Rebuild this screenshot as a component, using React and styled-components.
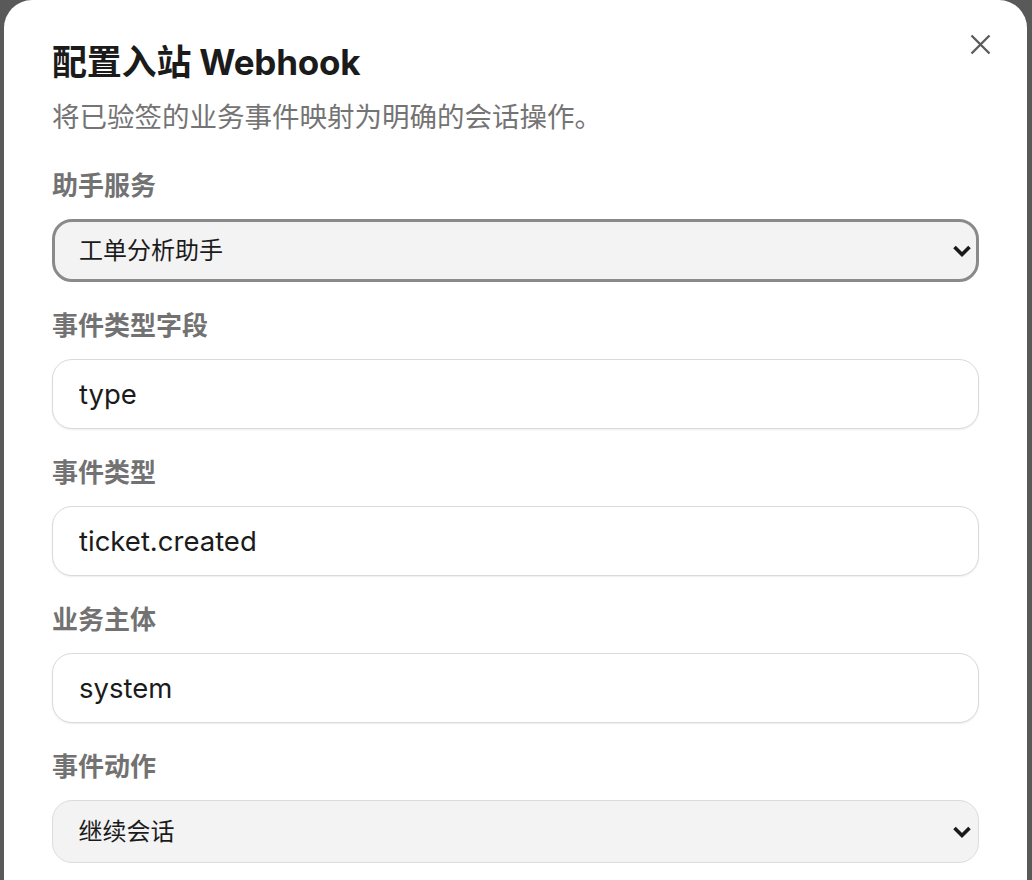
import React from "react";
import styled, { createGlobalStyle } from "styled-components";

const Global = createGlobalStyle`
  html, body {
    margin: 0;
    padding: 0;
    height: 880px;
    overflow: hidden;
    background: #595959;
  }
  * { box-sizing: border-box; }
  body {
    font-family: "Inter", "Noto Sans CJK SC", sans-serif;
  }
`;

const Page = styled.div`
  display: flex;
  padding-left: 4px;
`;

const Modal = styled.div`
  position: relative;
  width: 1023px;
  background: #ffffff;
  border-radius: 28px 28px 0 0;
  padding: 40px 48px 70px 48px;
  display: flex;
  flex-direction: column;
`;

const Header = styled.div`
  display: flex;
  flex-direction: column;
  gap: 14px;
  margin-bottom: 33px;
`;

const Title = styled.h2`
  margin: 0;
  font-size: 35px;
  line-height: 44px;
  font-weight: 700;
  color: #1b1b1b;
  letter-spacing: -0.2px;
`;

const Subtitle = styled.p`
  margin: 0;
  font-size: 27.5px;
  line-height: 38px;
  font-weight: 400;
  color: #747474;
`;

const CloseButton = styled.button`
  position: absolute;
  top: 34px;
  right: 36px;
  width: 21px;
  height: 21px;
  padding: 0;
  border: none;
  background: transparent;
  display: flex;
  align-items: center;
  justify-content: center;
  cursor: pointer;
`;

const Fields = styled.div`
  display: flex;
  flex-direction: column;
  gap: 27px;
`;

const Field = styled.label`
  display: flex;
  flex-direction: column;
  gap: 16px;
`;

const Label = styled.span`
  font-size: 26px;
  line-height: 34px;
  font-weight: 600;
  color: #727272;
`;

const TextInput = styled.input`
  width: 100%;
  height: 70px;
  padding: 0 26px;
  border: 1.5px solid #dadada;
  border-radius: 20px;
  background: #ffffff;
  box-shadow: 0 1px 2px rgba(0, 0, 0, 0.07);
  font-family: "Inter", "Noto Sans CJK SC", sans-serif;
  font-size: 27.5px;
  color: #1b1b1b;
  outline: none;
`;

const SelectWrap = styled.div`
  position: relative;
  width: 100%;
`;

const Select = styled.select`
  width: 100%;
  height: 63px;
  padding: 0 48px 0 ${(p) => (p.$focused ? "24px" : "25.5px")};
  border: ${(p) => (p.$focused ? "3px solid #8a8a8a" : "1.5px solid #dcdcdc")};
  border-radius: 20px;
  background: #f3f3f3;
  appearance: none;
  -webkit-appearance: none;
  font-family: "Inter", "Noto Sans CJK SC", sans-serif;
  font-size: 24px;
  color: #1b1b1b;
  outline: none;
`;

const Chevron = styled.svg`
  position: absolute;
  right: 7px;
  top: 50%;
  transform: translateY(-50%);
  pointer-events: none;
`;

const ChevronIcon = () => (
  <Chevron width="20" height="14" viewBox="0 0 20 14">
    <polyline
      points="2.5,3 10,10.5 17.5,3"
      fill="none"
      stroke="#1a1a1a"
      strokeWidth="3.6"
      strokeLinejoin="miter"
    />
  </Chevron>
);

const SelectField = ({ label, options, focused }) => (
  <Field>
    <Label>{label}</Label>
    <SelectWrap>
      <Select $focused={focused} defaultValue={options[0]}>
        {options.map((o) => (
          <option key={o} value={o}>
            {o}
          </option>
        ))}
      </Select>
      <ChevronIcon />
    </SelectWrap>
  </Field>
);

const InputField = ({ label, value }) => (
  <Field>
    <Label>{label}</Label>
    <TextInput readOnly defaultValue={value} />
  </Field>
);

export default function App() {
  return (
    <>
      <Global />
      <Page>
        <Modal>
          <CloseButton aria-label="关闭">
            <svg width="21" height="21" viewBox="0 0 21 21">
              <path
                d="M1.5 1.5 L19.5 19.5 M19.5 1.5 L1.5 19.5"
                stroke="#5a5a5a"
                strokeWidth="2.3"
                fill="none"
              />
            </svg>
          </CloseButton>
          <Header>
            <Title>配置入站 Webhook</Title>
            <Subtitle>将已验签的业务事件映射为明确的会话操作。</Subtitle>
          </Header>
          <Fields>
            <SelectField label="助手服务" options={["工单分析助手"]} focused />
            <InputField label="事件类型字段" value="type" />
            <InputField label="事件类型" value="ticket.created" />
            <InputField label="业务主体" value="system" />
            <SelectField label="事件动作" options={["继续会话", "新建会话"]} />
          </Fields>
        </Modal>
      </Page>
    </>
  );
}
